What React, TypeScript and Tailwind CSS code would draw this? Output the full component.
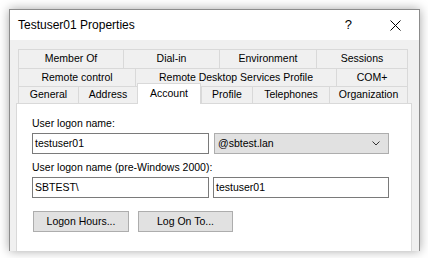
import { ReactNode } from 'react';

type Tab = { label: string; w: number; active?: boolean };

const rows: { h: number; tabs: Tab[] }[] = [
    {
        h: 19,
        tabs: [
            { label: 'Member Of', w: 105 },
            { label: 'Dial-in', w: 96 },
            { label: 'Environment', w: 97 },
            { label: 'Sessions', w: 92 },
        ],
    },
    {
        h: 18,
        tabs: [
            { label: 'Remote control', w: 117 },
            { label: 'Remote Desktop Services Profile', w: 201 },
            { label: 'COM+', w: 72 },
        ],
    },
    {
        h: 17,
        tabs: [
            { label: 'General', w: 60 },
            { label: 'Address', w: 59 },
            { label: 'Account', w: 64, active: true },
            { label: 'Profile', w: 51 },
            { label: 'Telephones', w: 77 },
            { label: 'Organization', w: 79 },
        ],
    },
];

function TabRow({ h, tabs }: { h: number; tabs: Tab[] }) {
    return (
        <div className="flex" style={{ height: h }}>
            {tabs.map((t) =>
                t.active ? (
                    <div
                        key={t.label}
                        className="relative z-10 -mt-[3px] -mb-[1px] flex items-start justify-center border border-b-0 border-[#d9d9d9] bg-white pt-[2px]"
                        style={{ width: t.w, height: h + 4 }}
                    >
                        {t.label}
                    </div>
                ) : (
                    <div
                        key={t.label}
                        className="flex items-center justify-center border-t border-l border-[#d9d9d9] bg-[#f0f0f0] last:border-r"
                        style={{ width: t.w }}
                    >
                        {t.label}
                    </div>
                )
            )}
        </div>
    );
}

function TextBox({ value, w }: { value: string; w: number }) {
    return (
        <div className="flex h-[21px] items-center border border-[#7a7a7a] bg-white px-[2px]" style={{ width: w }}>
            {value}
        </div>
    );
}

function Button({ children, w }: { children: ReactNode; w: number }) {
    return (
        <div className="flex h-[21px] items-center justify-center border border-[#adadad] bg-[#e1e1e1]" style={{ width: w }}>
            {children}
        </div>
    );
}

export default function App() {
    return (
        <div className="h-[258px] w-[428px] overflow-hidden bg-white pt-[9px] pl-[9px] font-['Liberation_Sans',Arial,sans-serif] text-[10.5px] text-black">
            <div className="flex h-[242px] w-[411px] flex-col border border-[#8c8c8c] border-b-0 bg-[#f0f0f0] shadow-[0_0_10px_rgba(0,0,0,0.35)]">
                {/* title bar */}
                <div className="flex h-[30px] shrink-0 items-center bg-white pl-[8px] text-[12px]">
                    <span className="flex-1">Testuser01 Properties</span>
                    <span className="mr-[38px] text-[13px]">?</span>
                    <svg width="11" height="11" viewBox="0 0 11 11" className="mr-[18px]">
                        <path d="M0.5 0.5 L10.5 10.5 M10.5 0.5 L0.5 10.5" stroke="#000" strokeWidth="1" />
                    </svg>
                </div>

                {/* body */}
                <div className="flex flex-1 flex-col pt-[9px] pl-[6px] pr-[7px]">
                    <div className="ml-[2px] flex flex-col">
                        {rows.map((r, i) => (
                            <TabRow key={i} h={r.h} tabs={r.tabs} />
                        ))}
                    </div>
                    <div className="flex flex-1 flex-col border-t border-l border-r border-[#d9d9d9] bg-white pt-[12px] pl-[15px]">
                        <div className="h-[14px] leading-[14px]">User logon name:</div>
                        <div className="mt-[3px] flex gap-[5px]">
                            <TextBox value="testuser01" w={177} />
                            <div className="flex h-[21px] w-[175px] items-center justify-between border border-[#adadad] bg-[#e1e1e1] pr-[8px] pl-[3px]">
                                <span>@sbtest.lan</span>
                                <svg width="8" height="5" viewBox="0 0 8 5">
                                    <path d="M0.5 0.5 L4 4 L7.5 0.5" stroke="#333" strokeWidth="1" fill="none" />
                                </svg>
                            </div>
                        </div>
                        <div className="mt-[6px] h-[14px] leading-[14px]">User logon name (pre-Windows 2000):</div>
                        <div className="mt-[3px] flex gap-[4px]">
                            <TextBox value="SBTEST\" w={177} />
                            <TextBox value="testuser01" w={176} />
                        </div>
                        <div className="mt-[13px] ml-[1px] flex gap-[9px]">
                            <Button w={96}>Logon Hours...</Button>
                            <Button w={95}>Log On To...</Button>
                        </div>
                    </div>
                </div>
            </div>
        </div>
    );
}
